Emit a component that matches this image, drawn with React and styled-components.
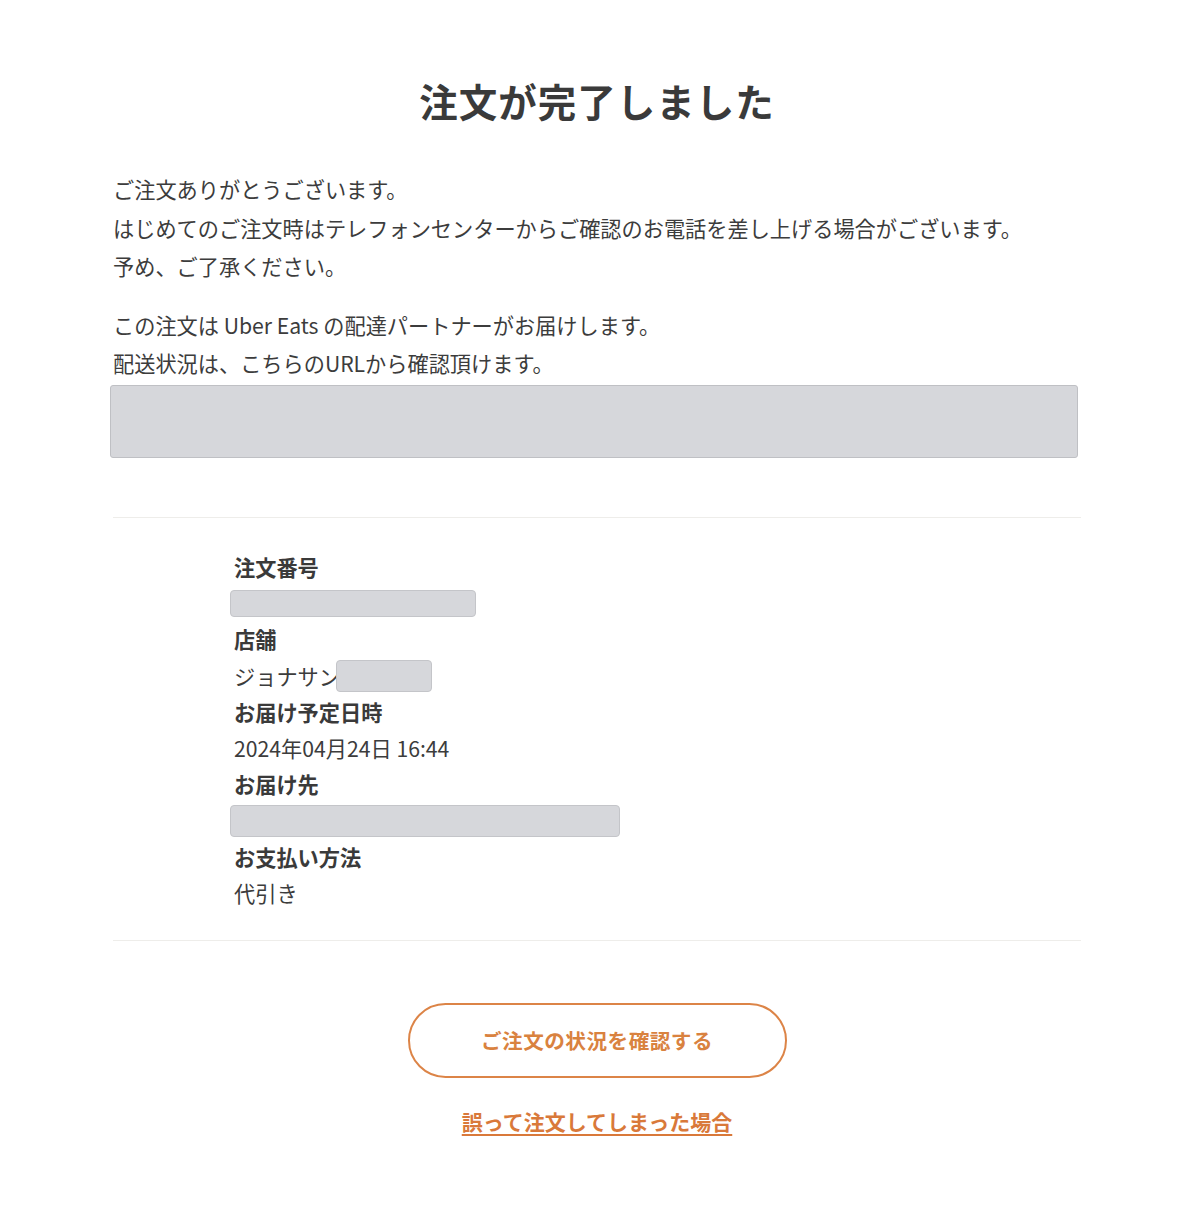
import React from "react";
import styled, { createGlobalStyle } from "styled-components";

const GlobalStyle = createGlobalStyle`
  body {
    margin: 0;
    background: #fff;
    font-family: "Noto Sans CJK JP", "Noto Sans", sans-serif;
    color: #3a3a3a;
  }
`;

const details = [
  { label: "注文番号", mask: { width: 246, height: 27 } },
  { label: "店舗", text: "ジョナサン", mask: { width: 96, height: 32 } },
  { label: "お届け予定日時", text: "2024年04月24日 16:44" },
  { label: "お届け先", mask: { width: 390, height: 32 } },
  { label: "お支払い方法", text: "代引き" },
];

const App = () => {
  return (
    <>
      <GlobalStyle />
      <Page>
        <Title>注文が完了しました</Title>

        <Message>
          <p>
            ご注文ありがとうございます。
            <br />
            はじめてのご注文時はテレフォンセンターからご確認のお電話を差し上げる場合がございます。
            <br />
            予め、ご了承ください。
          </p>
          <p>
            この注文は Uber Eats の配達パートナーがお届けします。
            <br />
            配送状況は、こちらのURLから確認頂けます。
          </p>
        </Message>

        <UrlBox />

        <Divider $top={59} />

        <DetailList>
          {details.map((item) => (
            <DetailItem key={item.label}>
              <DetailLabel>{item.label}</DetailLabel>
              <DetailValue>
                {item.text}
                {item.mask && (
                  <Mask $w={item.mask.width} $h={item.mask.height} />
                )}
              </DetailValue>
            </DetailItem>
          ))}
        </DetailList>

        <Divider $top={28} />

        <Actions>
          <StatusButton type="button">ご注文の状況を確認する</StatusButton>
          <CancelLink href="#">誤って注文してしまった場合</CancelLink>
        </Actions>
      </Page>
    </>
  );
};

const Page = styled.main`
  width: 974px;
  margin: 0 auto;
  padding: 72px 6px 60px 0;
  box-sizing: border-box;
`;

const Title = styled.h1`
  margin: 0 0 42px;
  text-align: center;
  font-size: 38.5px;
  font-weight: 700;
  line-height: 56px;
  letter-spacing: 1px;
  color: #3a3a3a;
`;

const Message = styled.div`
  font-size: 21.2px;
  line-height: 38.5px;
  color: #3c3c3c;

  p {
    margin: 0 0 20px;
  }

  p:last-child {
    margin-bottom: 0;
  }
`;

const UrlBox = styled.div`
  height: 71px;
  margin: 2px 3px 0 -3px;
  background: #d6d7db;
  border: 1px solid #bfc0c4;
  border-radius: 3px;
`;

const Divider = styled.hr`
  margin: ${(p) => p.$top}px 0 0;
  border: none;
  border-top: 1px solid #eeedea;
`;

const DetailList = styled.dl`
  margin: 31px 0 0 121px;
  display: flex;
  flex-direction: column;
`;

const DetailItem = styled.div`
  display: flex;
  flex-direction: column;
`;

const DetailLabel = styled.dt`
  font-size: 21.2px;
  font-weight: 700;
  line-height: 36.4px;
  color: #3a3a3a;
`;

const DetailValue = styled.dd`
  margin: 0;
  display: flex;
  align-items: center;
  min-height: 36.2px;
  font-size: 21.2px;
  line-height: 36.2px;
  color: #3c3c3c;
`;

const Mask = styled.span`
  display: inline-block;
  width: ${(p) => p.$w}px;
  height: ${(p) => p.$h}px;
  margin-left: -4px;
  background: #d6d7db;
  border: 1px solid #c4c5c9;
  border-radius: 4px;
  box-sizing: border-box;

  &:not(:first-child) {
    margin-left: -2px;
  }
`;

const Actions = styled.div`
  display: flex;
  flex-direction: column;
  align-items: center;
  margin-top: 62px;
`;

const StatusButton = styled.button`
  width: 379px;
  height: 75px;
  background: #fff;
  border: 2px solid #dc8447;
  border-radius: 38px;
  color: #d9823f;
  font-family: inherit;
  font-size: 20.6px;
  font-weight: 700;
  letter-spacing: 0.5px;
  cursor: pointer;
`;

const CancelLink = styled.a`
  margin-top: 27px;
  color: #d9793a;
  font-size: 21px;
  font-weight: 700;
  line-height: 32px;
  text-decoration: underline;
  text-underline-offset: 4px;
`;

export default App;
